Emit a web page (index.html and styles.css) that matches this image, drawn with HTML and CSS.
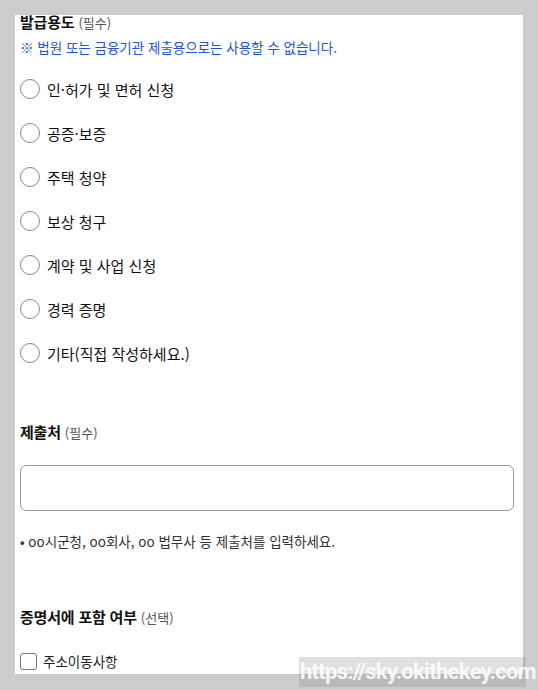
FILE: index.html
```html
<!DOCTYPE html>
<html lang="ko">
<head>
<meta charset="utf-8">
<title>발급용도</title>
<link rel="stylesheet" href="styles.css">
</head>
<body>
<div class="panel">
  <section class="purpose">
    <h3 class="label">발급용도 <span class="req">(필수)</span></h3>
    <p class="notice">※ 법원 또는 금융기관 제출용으로는 사용할 수 없습니다.</p>
    <ul class="radios">
      <li class="radio"><span class="circle"></span><span>인·허가 및 면허 신청</span></li>
      <li class="radio"><span class="circle"></span><span>공증·보증</span></li>
      <li class="radio"><span class="circle"></span><span>주택 청약</span></li>
      <li class="radio"><span class="circle"></span><span>보상 청구</span></li>
      <li class="radio"><span class="circle"></span><span>계약 및 사업 신청</span></li>
      <li class="radio"><span class="circle"></span><span>경력 증명</span></li>
      <li class="radio"><span class="circle"></span><span>기타(직접 작성하세요.)</span></li>
    </ul>
  </section>

  <section class="dest">
    <h3 class="label">제출처 <span class="req">(필수)</span></h3>
    <div class="input"></div>
    <p class="hint">• oo시군청, oo회사, oo 법무사 등 제출처를 입력하세요.</p>
  </section>

  <section class="include">
    <h3 class="label">증명서에 포함 여부 <span class="req">(선택)</span></h3>
    <div class="check"><span class="box"></span><span>주소이동사항</span></div>
  </section>
</div>
<div class="watermark">https://sky.okithekey.com</div>
</body>
</html>
```
FILE: styles.css
```css
* { box-sizing: border-box; }
html, body { margin: 0; padding: 0; }
body {
  background: #cccccc;
  padding: 15px 0 0 15px;
  font-family: "Noto Sans CJK KR", "Noto Sans", sans-serif;
  color: #111;
  position: relative;
  height: 690px;
  overflow: hidden;
}
.panel {
  background: #fff;
  width: 508px;
  height: 659px;
  padding: 0 5px;
}
.label {
  margin: 0;
  font-size: 15px;
  font-weight: 700;
  line-height: 14px;
  color: #111;
  letter-spacing: -0.2px;
}
.req {
  font-size: 13px;
  font-weight: 400;
  color: #555;
  letter-spacing: 0;
}
.notice {
  margin: 8px 0 0;
  font-size: 13.5px;
  line-height: 18px;
  color: #2255cc;
}
.radios {
  list-style: none;
  margin: 11px 0 0;
  padding: 0;
}
.radio {
  height: 44px;
  display: flex;
  align-items: center;
  gap: 7px;
  font-size: 15px;
  color: #111;
}
.circle {
  width: 20px;
  height: 20px;
  border: 1px solid #8a8a8a;
  border-radius: 50%;
  flex: none;
}
.dest { margin-top: 47px; }
.dest .label { line-height: 20px; }
.input {
  margin-top: 22px;
  width: 494px;
  height: 46px;
  border: 1px solid #999;
  border-radius: 6px;
}
.hint {
  margin: 21px 0 0;
  font-size: 13.5px;
  line-height: 18px;
  color: #333;
}
.include { margin-top: 57px; }
.include .label { line-height: 20px; }
.check {
  margin-top: 23px;
  height: 20px;
  display: flex;
  align-items: center;
  gap: 6px;
  font-size: 13.5px;
  color: #222;
}
.box {
  width: 17px;
  height: 17px;
  border: 1px solid #777;
  border-radius: 3px;
  flex: none;
}
.watermark {
  position: absolute;
  left: 299px;
  top: 657px;
  width: 227px;
  height: 30px;
  background: rgba(123,123,123,0.235);
  color: rgba(255,255,255,0.85);
  font-family: Roboto, sans-serif;
  font-weight: 700;
  font-size: 22px;
  line-height: 30px;
  letter-spacing: -0.7px;
  white-space: nowrap;
  padding-left: 1px;
}
```
